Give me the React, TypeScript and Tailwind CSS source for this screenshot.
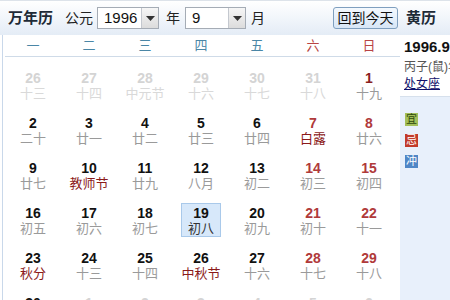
const CJK = "font-['Liberation_Sans','Noto_Sans_CJK_SC',sans-serif]";

type Cell = { d: number; l: string; kind?: "other" | "fest" | "today" };

const rows: Cell[][] = [
  [
    { d: 26, l: "十三", kind: "other" },
    { d: 27, l: "十四", kind: "other" },
    { d: 28, l: "中元节", kind: "other" },
    { d: 29, l: "十六", kind: "other" },
    { d: 30, l: "十七", kind: "other" },
    { d: 31, l: "十八", kind: "other" },
    { d: 1, l: "十九" },
  ],
  [
    { d: 2, l: "二十" },
    { d: 3, l: "廿一" },
    { d: 4, l: "廿二" },
    { d: 5, l: "廿三" },
    { d: 6, l: "廿四" },
    { d: 7, l: "白露", kind: "fest" },
    { d: 8, l: "廿六" },
  ],
  [
    { d: 9, l: "廿七" },
    { d: 10, l: "教师节", kind: "fest" },
    { d: 11, l: "廿九" },
    { d: 12, l: "八月" },
    { d: 13, l: "初二" },
    { d: 14, l: "初三" },
    { d: 15, l: "初四" },
  ],
  [
    { d: 16, l: "初五" },
    { d: 17, l: "初六" },
    { d: 18, l: "初七" },
    { d: 19, l: "初八", kind: "today" },
    { d: 20, l: "初九" },
    { d: 21, l: "初十" },
    { d: 22, l: "十一" },
  ],
  [
    { d: 23, l: "秋分", kind: "fest" },
    { d: 24, l: "十三" },
    { d: 25, l: "十四" },
    { d: 26, l: "中秋节", kind: "fest" },
    { d: 27, l: "十六" },
    { d: 28, l: "十七" },
    { d: 29, l: "十八" },
  ],
  [
    { d: 30, l: "十九" },
    { d: 1, l: "二十", kind: "other" },
    { d: 2, l: "廿一", kind: "other" },
    { d: 3, l: "廿二", kind: "other" },
    { d: 4, l: "廿三", kind: "other" },
    { d: 5, l: "廿四", kind: "other" },
    { d: 6, l: "廿五", kind: "other" },
  ],
];

const weekdays = ["一", "二", "三", "四", "五", "六", "日"];

function Select({ value, width }: { value: string; width: string }) {
  return (
    <div className={`flex h-[22px] ${width} border border-[#a5acb5] bg-white`}>
      <span className="flex-1 pl-[6px] text-[15px] leading-[20px] text-[#111]">{value}</span>
      <span className="flex w-[17px] items-center justify-center border-l border-[#c4c8cf] bg-gradient-to-b from-[#f6f6f6] to-[#dcdcdc]">
        <svg width="9" height="5" viewBox="0 0 9 5">
          <path d="M0 0h9L4.5 5z" fill="#333" />
        </svg>
      </span>
    </div>
  );
}

function DayCell({ c, col }: { c: Cell; col: number }) {
  const weekend = col >= 5;
  let num = "text-[#111]";
  let lunar = "text-[#9a9a9a]";
  if (c.kind === "other") {
    num = "text-[#d4d4d4]";
    lunar = "text-[#d9d9d9]";
  } else if (weekend) {
    num = col === 6 && c.d === 1 ? "text-[#8a1f1f]" : "text-[#b03a3a]";
  }
  if (c.kind === "fest") lunar = "text-[#8b1a1a]";
  const box =
    c.kind === "today"
      ? "border border-[#a9c9ea] bg-[#d7e8fa]"
      : "border border-transparent";
  return (
    <div className="flex h-[45px] justify-center pt-[11px]">
      <div className={`flex h-[34px] w-[40px] flex-col items-center pt-[2px] ${box}`}>
        <span className={`text-[14px] font-bold leading-[15px] ${num}`}>{c.d}</span>
        <span className={`whitespace-nowrap text-[13px] leading-[15px] ${c.kind === "today" ? "text-[#333]" : lunar}`}>
          {c.l}
        </span>
      </div>
    </div>
  );
}

export default function App() {
  return (
    <div className={`h-[300px] w-[450px] overflow-hidden bg-white ${CJK}`}>
      {/* Top bar */}
      <div className="flex h-[35px] items-center border-t border-[#dde3ea] bg-gradient-to-b from-white to-[#e4ecf6] text-[#222]">
        <span className="ml-[8px] text-[15px] font-bold text-[#1e2a36]">万年历</span>
        <span className="ml-[12px] text-[14px]">公元</span>
        <div className="ml-[4px]">
          <Select value="1996" width="w-[62px]" />
        </div>
        <span className="ml-[7px] text-[14px]">年</span>
        <div className="ml-[5px]">
          <Select value="9" width="w-[61px]" />
        </div>
        <span className="ml-[5px] text-[14px]">月</span>
        <button className="ml-[68px] h-[22px] w-[65px] rounded-[3px] border border-[#7f9fbf] bg-gradient-to-b from-[#f4f9fe] to-[#d7e6f6] text-[14px] leading-[20px] text-[#111]">
          回到今天
        </button>
        <span className="ml-[8px] whitespace-nowrap text-[15px] font-bold text-[#1e2a36]">黄历</span>
      </div>

      <div className="flex">
        {/* Calendar */}
        <div className="ml-[2px] w-[398px] border-l border-[#c9d8ea] pl-[2px]">
          <div className="grid h-[22px] grid-cols-[repeat(7,56px)] items-center border-b border-[#cfdbe8] text-[13px]">
            {weekdays.map((w, i) => (
              <span key={w} className={`text-center ${i >= 5 ? "text-[#b84444]" : "text-[#4a86a6]"}`}>
                {w}
              </span>
            ))}
          </div>
          {rows.map((r, ri) => (
            <div key={ri} className="grid grid-cols-[repeat(7,56px)]">
              {r.map((c, ci) => (
                <DayCell key={ci} c={c} col={ci} />
              ))}
            </div>
          ))}
        </div>

        {/* Almanac panel */}
        <div className="w-[50px] shrink-0 overflow-hidden whitespace-nowrap">
          <div className="h-[62px] border-b border-[#d6e0ec] pl-[4px] pt-[4px]">
            <div className="text-[15px] font-bold leading-[16px] text-[#111]">1996.9.19</div>
            <div className="mt-[4px] text-[12px] leading-[16px] text-[#555]">丙子(鼠)年</div>
            <div className="text-[12px] leading-[18px] text-[#10106a] underline">处女座</div>
          </div>
          <div className="flex h-[300px] flex-col gap-[8px] bg-[#e8f0fb] pl-[5px] pt-[16px]">
            <span className="flex h-[13px] w-[13px] items-center justify-center bg-[#a3bf5a] text-[11px] leading-none text-[#2d4a0c]">宜</span>
            <span className="flex h-[13px] w-[13px] items-center justify-center bg-[#c23b2b] text-[11px] leading-none text-white">忌</span>
            <span className="flex h-[13px] w-[13px] items-center justify-center bg-[#4f86c6] text-[11px] leading-none text-white">冲</span>
          </div>
        </div>
      </div>
    </div>
  );
}
